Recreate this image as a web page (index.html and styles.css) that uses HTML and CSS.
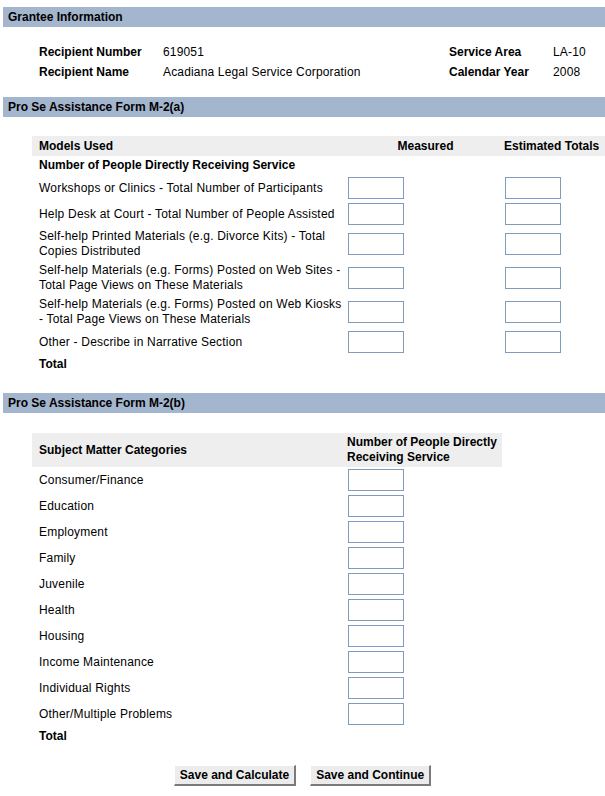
FILE: index.html
```html
<!DOCTYPE html>
<html>
<head>
<meta charset="utf-8">
<title>Pro Se Assistance Form M-2</title>
<link rel="stylesheet" href="styles.css">
</head>
<body>
<div class="page">
  <div class="bar">Grantee Information</div>
  <div class="grantee">
    <div class="g-label">Recipient Number</div>
    <div class="g-value">619051</div>
    <div class="g-label">Service Area</div>
    <div class="g-value">LA-10</div>
    <div class="g-label">Recipient Name</div>
    <div class="g-value">Acadiana Legal Service Corporation</div>
    <div class="g-label">Calendar Year</div>
    <div class="g-value">2008</div>
  </div>

  <div class="bar">Pro Se Assistance Form M-2(a)</div>
  <div class="table-a">
    <div class="row head">
      <div class="cell label">Models Used</div>
      <div class="cell center">Measured</div>
      <div class="cell">Estimated Totals</div>
    </div>
    <div class="row sub">
      <div class="cell label bold">Number of People Directly Receiving Service</div>
    </div>
    <div class="row data">
      <div class="cell label">Workshops or Clinics - Total Number of Participants</div>
      <div class="cell"><input class="box" type="text"></div>
      <div class="cell"><input class="box" type="text"></div>
    </div>
    <div class="row data">
      <div class="cell label">Help Desk at Court - Total Number of People Assisted</div>
      <div class="cell"><input class="box" type="text"></div>
      <div class="cell"><input class="box" type="text"></div>
    </div>
    <div class="row data">
      <div class="cell label">Self-help Printed Materials (e.g. Divorce Kits) - Total<br>Copies Distributed</div>
      <div class="cell"><input class="box" type="text"></div>
      <div class="cell"><input class="box" type="text"></div>
    </div>
    <div class="row data">
      <div class="cell label">Self-help Materials (e.g. Forms) Posted on Web Sites -<br>Total Page Views on These Materials</div>
      <div class="cell"><input class="box" type="text"></div>
      <div class="cell"><input class="box" type="text"></div>
    </div>
    <div class="row data">
      <div class="cell label">Self-help Materials (e.g. Forms) Posted on Web Kiosks<br>- Total Page Views on These Materials</div>
      <div class="cell"><input class="box" type="text"></div>
      <div class="cell"><input class="box" type="text"></div>
    </div>
    <div class="row data">
      <div class="cell label">Other - Describe in Narrative Section</div>
      <div class="cell"><input class="box" type="text"></div>
      <div class="cell"><input class="box" type="text"></div>
    </div>
    <div class="row total">
      <div class="cell label bold">Total</div>
    </div>
  </div>

  <div class="bar">Pro Se Assistance Form M-2(b)</div>
  <div class="table-b">
    <div class="row head2">
      <div class="cell label">Subject Matter Categories</div>
      <div class="cell">Number of People Directly<br>Receiving Service</div>
    </div>
    <div class="row data"><div class="cell label">Consumer/Finance</div><div class="cell"><input class="box" type="text"></div></div>
    <div class="row data"><div class="cell label">Education</div><div class="cell"><input class="box" type="text"></div></div>
    <div class="row data"><div class="cell label">Employment</div><div class="cell"><input class="box" type="text"></div></div>
    <div class="row data"><div class="cell label">Family</div><div class="cell"><input class="box" type="text"></div></div>
    <div class="row data"><div class="cell label">Juvenile</div><div class="cell"><input class="box" type="text"></div></div>
    <div class="row data"><div class="cell label">Health</div><div class="cell"><input class="box" type="text"></div></div>
    <div class="row data"><div class="cell label">Housing</div><div class="cell"><input class="box" type="text"></div></div>
    <div class="row data"><div class="cell label">Income Maintenance</div><div class="cell"><input class="box" type="text"></div></div>
    <div class="row data"><div class="cell label">Individual Rights</div><div class="cell"><input class="box" type="text"></div></div>
    <div class="row data"><div class="cell label">Other/Multiple Problems</div><div class="cell"><input class="box" type="text"></div></div>
    <div class="row total">
      <div class="cell label bold">Total</div>
    </div>
  </div>

  <div class="buttons">
    <button class="btn" type="button">Save and Calculate</button>
    <button class="btn" type="button">Save and Continue</button>
  </div>
</div>
</body>
</html>
```
FILE: styles.css
```css
html, body {
  margin: 0;
  padding: 0;
  background: #ffffff;
}

body {
  font-family: "Liberation Sans", Arial, sans-serif;
  font-size: 12px;
  color: #000000;
  overflow: hidden;
}

.page {
  padding-top: 7px;
}

.bar {
  margin-left: 3px;
  height: 20px;
  line-height: 20px;
  padding-left: 5px;
  background: #a4b5ce;
  font-weight: bold;
}

.grantee {
  display: grid;
  grid-template-columns: 124px 286px 104px 1fr;
  grid-auto-rows: 20px;
  align-items: center;
  padding: 15px 0 15px 39px;
}

.g-label {
  font-weight: bold;
}

.g-value {
  letter-spacing: 0.16px;
}

.table-a {
  margin: 19px 0 20px 32px;
}

.table-b {
  margin: 20px 0 0 32px;
  width: 470px;
}

.row {
  display: grid;
  grid-template-columns: 315px 157px 1fr;
  align-items: center;
}

.table-b .row {
  grid-template-columns: 315px 155px;
}

.cell {
  line-height: 15px;
  white-space: nowrap;
}

.label {
  padding-left: 7px;
}

.data .label {
  letter-spacing: 0.2px;
}

.center {
  text-align: center;
}

.bold {
  font-weight: bold;
}

.head {
  height: 20px;
  padding-top: 1px;
  box-sizing: border-box;
  background: #eeeeee;
  font-weight: bold;
}

.head2 {
  height: 34px;
  background: #eeeeee;
  font-weight: bold;
}

.sub {
  height: 19px;
}

.data {
  padding: 2px 0;
}

.data .cell:not(.label) {
  padding-left: 1px;
}

.total {
  height: 18px;
}

.box {
  display: block;
  box-sizing: border-box;
  width: 56px;
  height: 22px;
  margin: 0;
  padding: 0 2px;
  border: 1px solid #7f9db9;
  background: #ffffff;
  font: inherit;
}

.buttons {
  display: flex;
  justify-content: center;
  gap: 14px;
  margin-top: 20px;
}

.btn {
  height: 21px;
  padding: 0 5px;
  margin: 0;
  font-family: "Liberation Sans", Arial, sans-serif;
  font-size: 12px;
  font-weight: bold;
  color: #000000;
  background: #ececec;
  border-style: solid;
  border-width: 1px 2px 2px 1px;
  border-color: #ffffff #7a7a7a #7a7a7a #ffffff;
  border-radius: 0;
}
```
